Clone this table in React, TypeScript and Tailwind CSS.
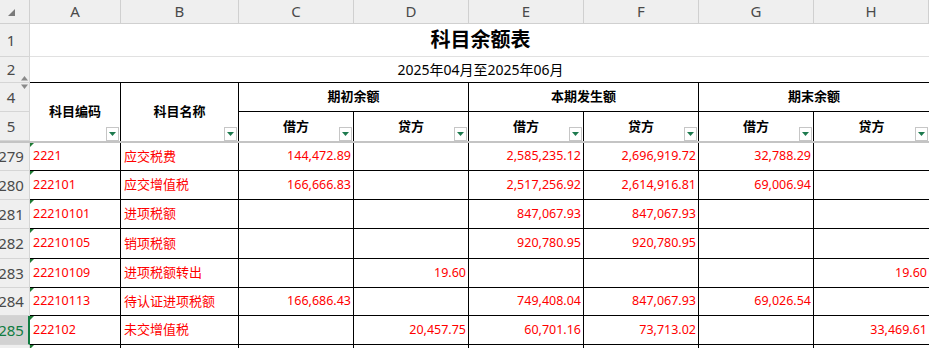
const colLetters = ["A", "B", "C", "D", "E", "F", "G", "H"];

const data = [
  { n: 279, code: "2221", name: "应交税费", v: ["144,472.89", "", "2,585,235.12", "2,696,919.72", "32,788.29", ""] },
  { n: 280, code: "222101", name: "应交增值税", v: ["166,666.83", "", "2,517,256.92", "2,614,916.81", "69,006.94", ""] },
  { n: 281, code: "22210101", name: "进项税额", v: ["", "", "847,067.93", "847,067.93", "", ""] },
  { n: 282, code: "22210105", name: "销项税额", v: ["", "", "920,780.95", "920,780.95", "", ""] },
  { n: 283, code: "22210109", name: "进项税额转出", v: ["", "19.60", "", "", "", "19.60"] },
  { n: 284, code: "22210113", name: "待认证进项税额", v: ["166,686.43", "", "749,408.04", "847,067.93", "69,026.54", ""] },
  { n: 285, code: "222102", name: "未交增值税", v: ["", "20,457.75", "60,701.16", "73,713.02", "", "33,469.61"] },
  { n: 286, code: "", name: "", v: ["", "", "", "", "", ""] },
];

const FilterButton = () => (
  <div className="absolute bottom-0 right-[1px] flex h-[14px] w-[13px] items-center justify-center border border-[#c6c6c6] bg-white">
    <svg width="7" height="4" viewBox="0 0 7 4">
      <path d="M0 0h7L3.5 4z" fill="#1d7a4e" />
    </svg>
  </div>
);

const RowHead = ({ children, selected }: { children: React.ReactNode; selected?: boolean }) => (
  <div
    className={
      selected
        ? "relative flex items-center overflow-hidden border-b border-r-2 border-b-[#d5d5d5] border-r-[#107c41] bg-[#d2d2d2] text-[#107c41]"
        : "relative flex items-center overflow-hidden border-b border-r border-[#d5d5d5] bg-[#efefef] text-[#4a4a4a]"
    }
  >
    <span className="-ml-2 w-[38px] shrink-0 text-center text-[15px]">{children}</span>
  </div>
);

const SubHead = ({ label, last }: { label: string; last?: boolean }) => (
  <div
    className={
      last
        ? "relative flex items-center justify-center text-[13px] font-bold"
        : "relative flex items-center justify-center border-r border-black text-[13px] font-bold"
    }
  >
    {label}
    <FilterButton />
  </div>
);

export default function App() {
  return (
    <div className="h-[348px] w-[929px] overflow-hidden bg-white font-['Noto_Sans','Noto_Sans_CJK_SC',sans-serif] text-black">
      <div className="grid grid-cols-[30px_91px_118px_115px_115px_115px_115px_115px_115px] grid-rows-[24px_33px_26px_29px_29px_2px_28px_29px_29px_30px_29px_28px_29px_29px]">
        {/* column headers */}
        <div className="border-b border-r border-[#d0d0d0] bg-[#efefef]">
          <svg width="7" height="7" viewBox="0 0 7 7" className="ml-2 mt-[9px]">
            <path d="M7 0v7H0z" fill="#7a7a7a" />
          </svg>
        </div>
        {colLetters.map((c) => (
          <div
            key={c}
            className="flex items-center justify-center border-b border-r border-[#d0d0d0] bg-[#efefef] text-[15px] text-[#4a4a4a]"
          >
            {c}
          </div>
        ))}

        {/* row 1 */}
        <RowHead>1</RowHead>
        <div className="col-span-8 flex items-center justify-center border-b border-[#e1e1e1] pl-[2px] text-[20px] font-bold">
          科目余额表
        </div>

        {/* row 2, row 3 hidden below it */}
        <div className="relative flex items-center border-b border-r border-[#d5d5d5] bg-[#efefef] text-[15px] text-[#4a4a4a]">
          <span className="-ml-2 w-[38px] shrink-0 text-center">2</span>
          <svg width="7" height="13" viewBox="0 0 7 13" className="absolute -bottom-[7px] right-[1px] z-10">
            <path d="M3.5 0L7 4.5H0z" fill="#8a8a8a" />
            <path d="M0 8.5h7L3.5 13z" fill="#8a8a8a" />
          </svg>
        </div>
        <div className="col-span-8 flex items-center justify-center border-b border-black pl-[2px] text-[14px]">
          2025年04月至2025年06月
        </div>

        {/* row 4 */}
        <RowHead>4</RowHead>
        <div className="relative row-span-2 flex items-center justify-center border-r border-black text-[13px] font-bold">
          科目编码
          <FilterButton />
        </div>
        <div className="relative row-span-2 flex items-center justify-center border-r border-black text-[13px] font-bold">
          科目名称
          <FilterButton />
        </div>
        <div className="col-span-2 flex items-center justify-center border-b border-r border-black text-[13px] font-bold">
          期初余额
        </div>
        <div className="col-span-2 flex items-center justify-center border-b border-r border-black text-[13px] font-bold">
          本期发生额
        </div>
        <div className="col-span-2 flex items-center justify-center border-b border-black text-[13px] font-bold">
          期末余额
        </div>

        {/* row 5 */}
        <RowHead>5</RowHead>
        <SubHead label="借方" />
        <SubHead label="贷方" />
        <SubHead label="借方" />
        <SubHead label="贷方" />
        <SubHead label="借方" />
        <SubHead label="贷方" last />

        {/* freeze pane line */}
        <div className="col-span-9 bg-[#c4c4c4]" />

        {/* data rows */}
        {data.map((r) => (
          <div key={r.n} className="contents">
            <RowHead selected={r.n === 285}>{r.n}</RowHead>
            <div className="relative flex items-center border-b border-r border-black pl-[3px] text-[12.5px] text-[#ff0000]">
              <div className="absolute left-0 top-0 h-0 w-0 border-r-[4px] border-t-[4px] border-r-transparent border-t-[#1e7b34]" />
              {r.code}
            </div>
            <div className="flex items-center border-b border-r border-black pl-[3px] text-[13px] text-[#ff0000]">
              {r.name}
            </div>
            {r.v.map((val, i) => (
              <div
                key={i}
                className={
                  i === 5
                    ? "flex items-center justify-end border-b border-black pr-[2px] text-[12.5px] text-[#ff0000]"
                    : "flex items-center justify-end border-b border-r border-black pr-[2px] text-[12.5px] text-[#ff0000]"
                }
              >
                {val}
              </div>
            ))}
          </div>
        ))}
      </div>
    </div>
  );
}
